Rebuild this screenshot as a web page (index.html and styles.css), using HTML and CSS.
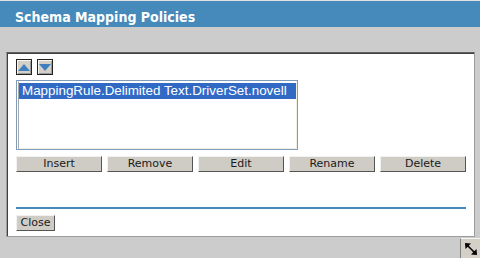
FILE: index.html
```html
<!DOCTYPE html>
<html lang="en">
<head>
    <meta charset="UTF-8">
    <title>Schema Mapping Policies</title>
    <link rel="stylesheet" href="styles.css">
</head>
<body>
    <div class="header">Schema Mapping Policies</div>

    <div class="main">
        <div class="panel">
            <!-- 並べ替えボタン -->
            <div class="arrows">
                <button class="arrow-btn" title="Move up">
                    <svg width="12" height="7" viewBox="0 0 12 7"><path d="M0 7 L6 0 L12 7 Z" fill="#3f7fc0"/></svg>
                </button>
                <button class="arrow-btn" title="Move down">
                    <svg width="12" height="7" viewBox="0 0 12 7"><path d="M0 0 L12 0 L6 7 Z" fill="#3f7fc0"/></svg>
                </button>
            </div>

            <div class="listbox">
                <div class="list">
                    <div class="list-item selected">MappingRule.Delimited Text.DriverSet.novell</div>
                </div>
            </div>

            <div class="actions">
                <button class="btn">Insert</button>
                <button class="btn">Remove</button>
                <button class="btn">Edit</button>
                <button class="btn">Rename</button>
                <button class="btn">Delete</button>
            </div>

            <div class="divider"></div>

            <button class="btn close-btn">Close</button>
        </div>
    </div>

    <div class="footer">
        <div class="grip">
            <svg width="18" height="18" viewBox="0 0 18 18">
                <path d="M4.5 4.5 L13.5 13.5" stroke="#000" stroke-width="1.6"/>
                <path d="M3 3 L9 3.5 L3.5 9 Z" fill="#000"/>
                <path d="M15 15 L9 14.5 L14.5 9 Z" fill="#000"/>
            </svg>
        </div>
    </div>
</body>
</html>
```

FILE: styles.css
```css
/* 全体 */
body {
    margin: 0;
    padding: 0;
    width: 480px;
    height: 258px;
    overflow: hidden;
    background-color: #cccccc;
    font-family: 'DejaVu Sans', sans-serif;
}

.header {
    height: 23px;
    line-height: 26px;
    padding-top: 3px;
    border-top: 1px solid #e2e2e2;
    background-color: #4689bb;
    color: white;
    font-family: 'DejaVu Sans Condensed', 'DejaVu Sans', sans-serif;
    font-size: 14px;
    font-weight: bold;
    padding-left: 15px;
    overflow: hidden;
}

.main {
    padding: 25px 5px 0 6px;
}

.panel {
    background-color: white;
    border: 1px solid #9c9c9c;
    border-top: 1px solid #606060;
    box-shadow: inset 1px 1px 0 #404040;
    padding: 6px 8px 5px 9px;
}

.arrows {
    display: flex;
    gap: 5px;
    margin-bottom: 5px;
}

.arrow-btn {
    width: 16px;
    height: 16px;
    padding: 0;
    background-color: #d4d0c8;
    border: 1px solid #222;
    box-shadow: inset 1px 1px 0 #f4f4f4, inset -1px -1px 0 #9a9a9a;
    display: flex;
    align-items: center;
    justify-content: center;
}

.listbox {
    width: 279px;
    height: 68px;
    border: 1px solid #7f9db9;
    padding-left: 1px;
    margin-bottom: 6px;
}

.list {
    height: 66px;
    border: 1px solid;
    border-color: #ffffff #f1efe2 #f1efe2 #a7a7a7;
}

.list-item {
    height: 16px;
    line-height: 16px;
    padding-left: 3px;
    font-family: 'Liberation Sans', Arial, sans-serif;
    font-size: 13.4px;
    margin-top: 1px;
}

.list-item.selected {
    background-color: #316ac5;
    color: white;
}

.actions {
    display: flex;
    gap: 5px;
}

.btn {
    height: 16px;
    width: 86px;
    padding: 0;
    font-family: 'DejaVu Sans', sans-serif;
    font-size: 11px;
    line-height: 14px;
    color: #1a1a1a;
    background-color: #cfccc5;
    border: 1px solid;
    border-color: #f2f2f2 #555 #555 #f2f2f2;
}

.divider {
    width: 450px;
    height: 2px;
    background-color: #4689bb;
    margin: 35px 0 6px 0;
}

.close-btn {
    width: 39px;
    display: block;
}

.footer {
    display: flex;
    justify-content: flex-end;
    padding-top: 1px;
}

.grip {
    width: 19px;
    height: 19px;
    background-color: #d4d0c8;
    border-top: 1px solid #f4f4f4;
    border-left: 1px solid #808080;
    display: flex;
    align-items: center;
    justify-content: center;
}
```
